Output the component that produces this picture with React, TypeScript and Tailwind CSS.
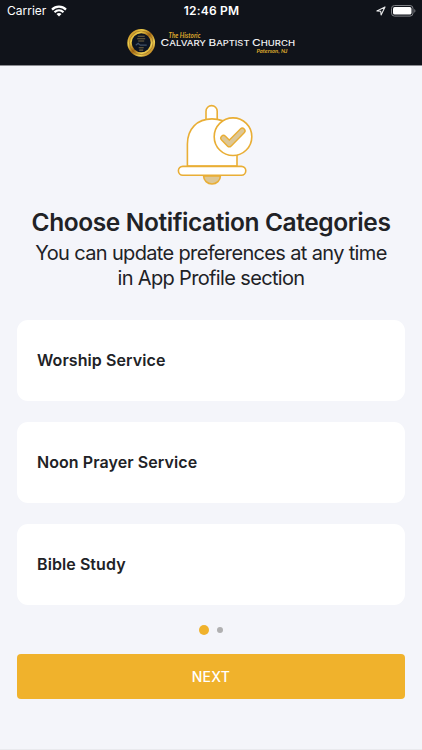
import React, { useState } from 'react';

const CATEGORIES = ['Worship Service', 'Noon Prayer Service', 'Bible Study'];

const WifiIcon = () => (
  <svg width="16" height="12" viewBox="0 0 16 12" fill="none" stroke="#fff" strokeWidth="2.2">
    <path d="M1 4.6C5 .7 11 .7 15 4.6" />
    <path d="M3.5 7.3C6.2 4.8 9.8 4.8 12.5 7.3" />
    <path d="M5.5 9C7 7.7 9 7.7 10.5 9L8 11.5Z" fill="#fff" stroke="none" />
  </svg>
);

const LocationIcon = () => (
  <svg width="10" height="10" viewBox="0 0 10 10" fill="none" stroke="#e8e9ea" strokeWidth="1.1" strokeLinejoin="round">
    <path d="M9 .9L.9 4.9L4.7 5.2L5.1 9Z" />
  </svg>
);

const BatteryIcon = () => (
  <svg width="25" height="12" viewBox="0 0 25 12">
    <rect x=".5" y=".5" width="21.5" height="10.6" rx="3" fill="none" stroke="#7e8085" />
    <rect x="2" y="2" width="18.5" height="7.6" rx="1.7" fill="#fff" />
    <path d="M23.3 4V7.8C24.8 7 24.8 4.8 23.3 4Z" fill="#7e8085" />
  </svg>
);

const Logo = () => (
  <svg width="170" height="30" viewBox="0 0 170 30" className="block">
    <defs>
      <linearGradient id="gold" x1="0" y1="0" x2="1" y2="1">
        <stop offset="0" stopColor="#b87a16" />
        <stop offset=".25" stopColor="#f0cf4c" />
        <stop offset=".5" stopColor="#a56a13" />
        <stop offset=".75" stopColor="#f2d354" />
        <stop offset="1" stopColor="#a8660f" />
      </linearGradient>
    </defs>
    <circle cx="15.2" cy="15.8" r="11.7" fill="#0d1422" stroke="url(#gold)" strokeWidth="4.4" />
    <circle cx="15.2" cy="15.8" r="11.8" fill="none" stroke="#7d5316" strokeWidth=".5" />
    <g stroke="#746542" strokeWidth="1.1">
      <path d="M11.7 9.3H18.7M11.2 11.8H19.2M12.2 14H18.2M12.7 20.8H17.7M13.2 23.1H17.2" />
      <path d="M9.7 18.3L12.2 16.3L14.2 18.1H20.7" stroke="#40516a" fill="none" />
    </g>
    <text x="42.5" y="11" textLength="32" lengthAdjust="spacingAndGlyphs" fill="#dda72c" fontFamily="Lato, cursive" fontStyle="italic" fontWeight="700" fontSize="6.8">The Historic</text>
    <g fill="#f1f1f3" fontFamily="Inter, sans-serif" fontWeight="500">
      <text x="34.5" y="19.3" textLength="45.5" lengthAdjust="spacingAndGlyphs" fontSize="6.9"><tspan fontSize="8.6">C</tspan>ALVARY</text>
      <text x="82.5" y="19.3" textLength="41" lengthAdjust="spacingAndGlyphs" fontSize="6.9"><tspan fontSize="8.6">B</tspan>APTIST</text>
      <text x="126" y="19.3" textLength="43" lengthAdjust="spacingAndGlyphs" fontSize="6.9"><tspan fontSize="8.6">C</tspan>HURCH</text>
    </g>
    <text x="130.5" y="26" textLength="31" lengthAdjust="spacingAndGlyphs" fill="#dda72c" fontFamily="Lato, cursive" fontStyle="italic" fontWeight="700" fontSize="6.4">Paterson, NJ</text>
  </svg>
);

const BellIcon = () => (
  <svg width="78" height="82" viewBox="0 0 78 82" fill="#fff" stroke="#e9ae35" strokeWidth="1.6" className="block">
    <path d="M29 18V7.2A5.6 5.6 0 0 1 40.2 7.2V18" />
    <path d="M10.4 62V40C10.4 25 20 14.9 35 14.9C50 14.9 60 25 60 40V62Z" />
    <path d="M26.6 72A8.4 8 0 0 0 43.4 72Z" fill="#ddc796" />
    <rect x="1.4" y="62.4" width="67.4" height="8.8" rx="4.4" />
    <circle cx="56" cy="32.7" r="18.8" />
    <path d="M46.5 34.1L52.3 40L65.3 26.9" fill="none" strokeWidth="6.8" strokeLinecap="round" strokeLinejoin="round" />
    <path d="M46.5 34.1L52.3 40L65.3 26.9" fill="none" stroke="#ddc796" strokeWidth="4" strokeLinecap="round" strokeLinejoin="round" />
  </svg>
);

const App: React.FC = () => {
  const [selected, setSelected] = useState<string[]>([]);

  const toggle = (name: string) =>
    setSelected((s) => (s.includes(name) ? s.filter((n) => n !== name) : [...s, name]));

  return (
    <div className="w-full h-[750px] bg-[#f4f5fa] font-['Inter','Liberation_Sans',sans-serif] text-[#212226] flex flex-col overflow-hidden">

      <header className="h-[66px] shrink-0 bg-[#10131a] border-b border-[#8b8c91] text-white">
        <div className="h-[22px] grid grid-cols-3 items-center pl-[7px] pr-[6px] text-[12px]">
          <div className="flex items-center gap-[5px]">
            <span>Carrier</span>
            <WifiIcon />
          </div>
          <span className="text-center font-semibold tracking-[0.2px]">12:46 PM</span>
          <div className="flex items-center justify-end gap-[5px]">
            <LocationIcon />
            <BatteryIcon />
          </div>
        </div>
        <div className="pt-[5px] pl-[126px]">
          <Logo />
        </div>
      </header>

      <main className="flex-1 px-[17px] flex flex-col">
        <div className="pt-[38px] pl-[160px]">
          <BellIcon />
        </div>

        <div className="mt-[20px] text-center whitespace-nowrap">
          <h1 className="-mx-4 text-[24.5px] leading-[32px] font-semibold tracking-[-0.4px]">Choose Notification Categories</h1>
          <p className="text-[20px] leading-[24.5px] tracking-[-0.65px] mt-[3px]">
            You can update preferences at any time
            <br />
            in App Profile section
          </p>
        </div>

        <div className="mt-[30px] flex flex-col gap-[21px]">
          {CATEGORIES.map((name) => (
            <button
              key={name}
              onClick={() => toggle(name)}
              aria-pressed={selected.includes(name)}
              className="h-[81px] w-full shrink-0 rounded-[11px] bg-white px-[20px] pb-px text-left text-[16px] font-semibold tracking-[0.08px]"
            >
              {name}
            </button>
          ))}
        </div>

        {/* Pager */}
        <div className="mt-[19px] h-[11px] flex items-center justify-center gap-[8px]">
          <span className="size-[10px] rounded-full bg-[#f0b22c]" />
          <span className="size-[6px] rounded-full bg-[#b0b0b1]" />
        </div>

        <button className="mt-[19px] h-[45px] w-full shrink-0 rounded-[4px] bg-[#f0b22c] pb-px text-[14px] font-medium tracking-[0.3px] text-white">
          NEXT
        </button>
      </main>

      <div className="h-px shrink-0 bg-[#e9eaee]" />
    </div>
  );
};

export default App;
